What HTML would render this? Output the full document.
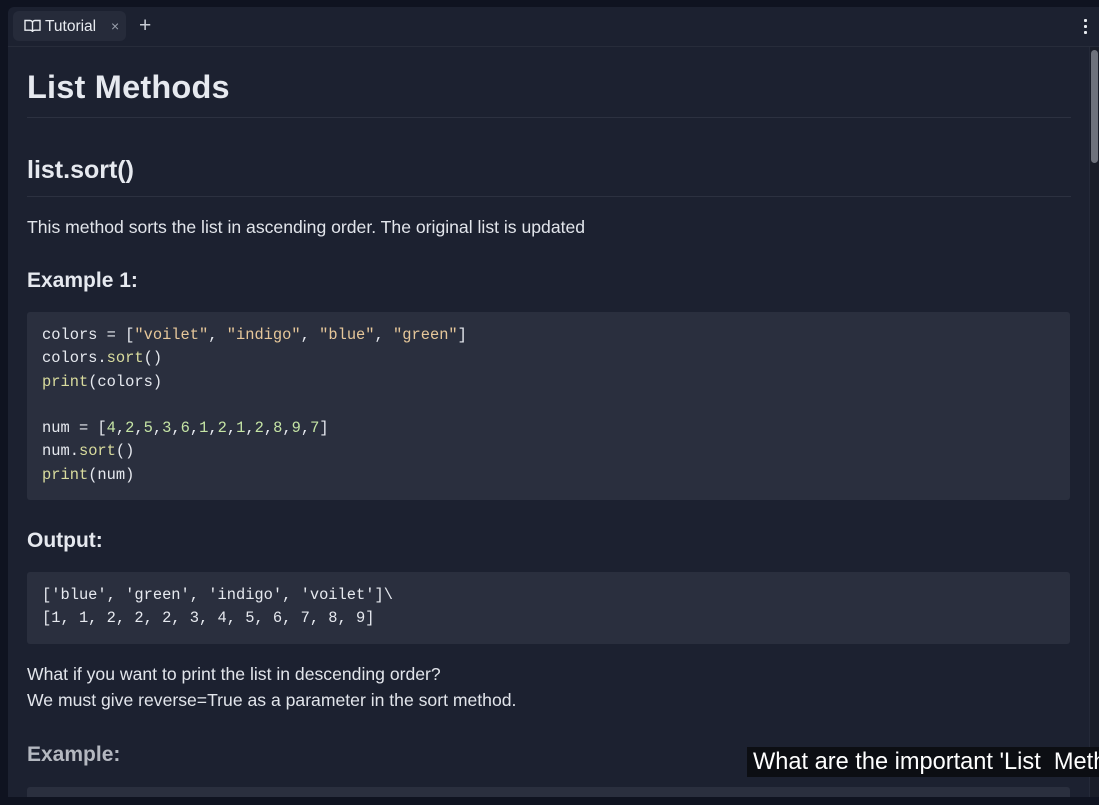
<!DOCTYPE html>
<html><head><style>
body{margin:0;width:1099px;height:805px;background:#0f1320;overflow:hidden;font-family:"Liberation Sans",sans-serif;color:#e6e9ef;position:relative}
.panel{position:absolute;left:8px;top:7px;width:1091px;height:790px;background:#1c2130;border-radius:6px 0 0 0;overflow:hidden}
.tabbar{position:absolute;left:0;top:0;right:0;height:39px;border-bottom:1px solid #272c3a}
.tab{position:absolute;left:5px;top:4px;width:113px;height:30px;background:#262b3a;border-radius:6px;font-size:15.5px;color:#e8ebf0}
.tab span{position:absolute;left:32px;top:7px}
.x{position:absolute;left:98px;top:7px;color:#9aa0ac;font-size:14px}
.plus{position:absolute;left:131px;top:7px;font-size:21px;color:#c8ccd4;font-weight:300}
.dots{position:absolute;right:12px;top:12px;width:3px}
.dots i{display:block;width:3px;height:3px;background:#e8ebf0;margin-bottom:3px;border-radius:1px}
.sb{position:absolute;left:1081px;top:40px;width:10px;height:750px;background:#191d28;border-left:1px solid #242938}
.thumb{position:absolute;left:1083px;top:43px;width:7px;height:113px;background:#6e727c;border-radius:4px}
.c{position:absolute;left:19px;width:1043px}
h1{margin:0;font-size:32.5px;font-weight:bold;letter-spacing:0.2px}
h2{margin:0;font-size:25px;font-weight:bold}
h3{margin:0;font-size:21px;font-weight:bold}
.hr{position:absolute;left:19px;width:1044px;height:1px;background:#2c3140}
p{margin:0;font-size:17.6px;color:#e2e5eb;line-height:26px}
.code{position:absolute;left:19px;width:1043px;background:#2a2f3e;border-radius:3px;font-family:"Liberation Mono",monospace;font-size:15.4px;line-height:23.3px;color:#e6e9ef;box-sizing:border-box;padding:12px 15px;white-space:pre}
.s{color:#e6c79a}.f{color:#d9dc9e}.n{color:#c5e4a5}
.cap{position:absolute;left:747px;top:747px;width:352px;height:30px;background:#0c0e13;color:#fff;font-size:23.6px;line-height:30px;padding-left:6px;white-space:nowrap;overflow:hidden;box-sizing:border-box}
</style></head><body>
<div class="panel">
<div class="tabbar">
<div class="tab"><svg style="position:absolute;left:11px;top:8px" width="17" height="14" viewBox="0 0 17 14" fill="none" stroke="#e8ebf0" stroke-width="1.4"><path d="M1 1.5h5c1.5 0 2.5 1 2.5 2.5v9c0-1-1-1.8-2.5-1.8H1z M16 1.5h-5c-1.5 0-2.5 1-2.5 2.5v9c0-1 1-1.8 2.5-1.8H16z"/></svg><span>Tutorial</span><div class="x">×</div></div>
<div class="plus">+</div>
<div class="dots"><i></i><i></i><i></i></div>
</div>
<div class="sb"></div><div class="thumb"></div>
<h1 class="c" style="top:62px">List Methods</h1>
<div class="hr" style="top:110px"></div>
<h2 class="c" style="top:149px">list.sort()</h2>
<div class="hr" style="top:189px"></div>
<p class="c" style="top:207px">This method sorts the list in ascending order. The original list is updated</p>
<h3 class="c" style="top:262px">Example 1:</h3>
<div class="code" style="top:305px;height:188px">colors = [<span class="s">"voilet"</span>, <span class="s">"indigo"</span>, <span class="s">"blue"</span>, <span class="s">"green"</span>]
colors.<span class="f">sort</span>()
<span class="f">print</span>(colors)

num = [<span class="n">4</span>,<span class="n">2</span>,<span class="n">5</span>,<span class="n">3</span>,<span class="n">6</span>,<span class="n">1</span>,<span class="n">2</span>,<span class="n">1</span>,<span class="n">2</span>,<span class="n">8</span>,<span class="n">9</span>,<span class="n">7</span>]
num.<span class="f">sort</span>()
<span class="f">print</span>(num)</div>
<h3 class="c" style="top:522px">Output:</h3>
<div class="code" style="top:565px;height:72px">['blue', 'green', 'indigo', 'voilet']\
[1, 1, 2, 2, 2, 3, 4, 5, 6, 7, 8, 9]</div>
<p class="c" style="top:654px">What if you want to print the list in descending order?<br>We must give reverse=True as a parameter in the sort method.</p>
<h3 class="c" style="top:736px;color:#b4b8c0">Example:</h3>
<div class="code" style="top:780px;height:20px;padding:0"></div>
</div>
<div class="cap">What are the important 'List&nbsp; Methods'</div>
</body></html>
